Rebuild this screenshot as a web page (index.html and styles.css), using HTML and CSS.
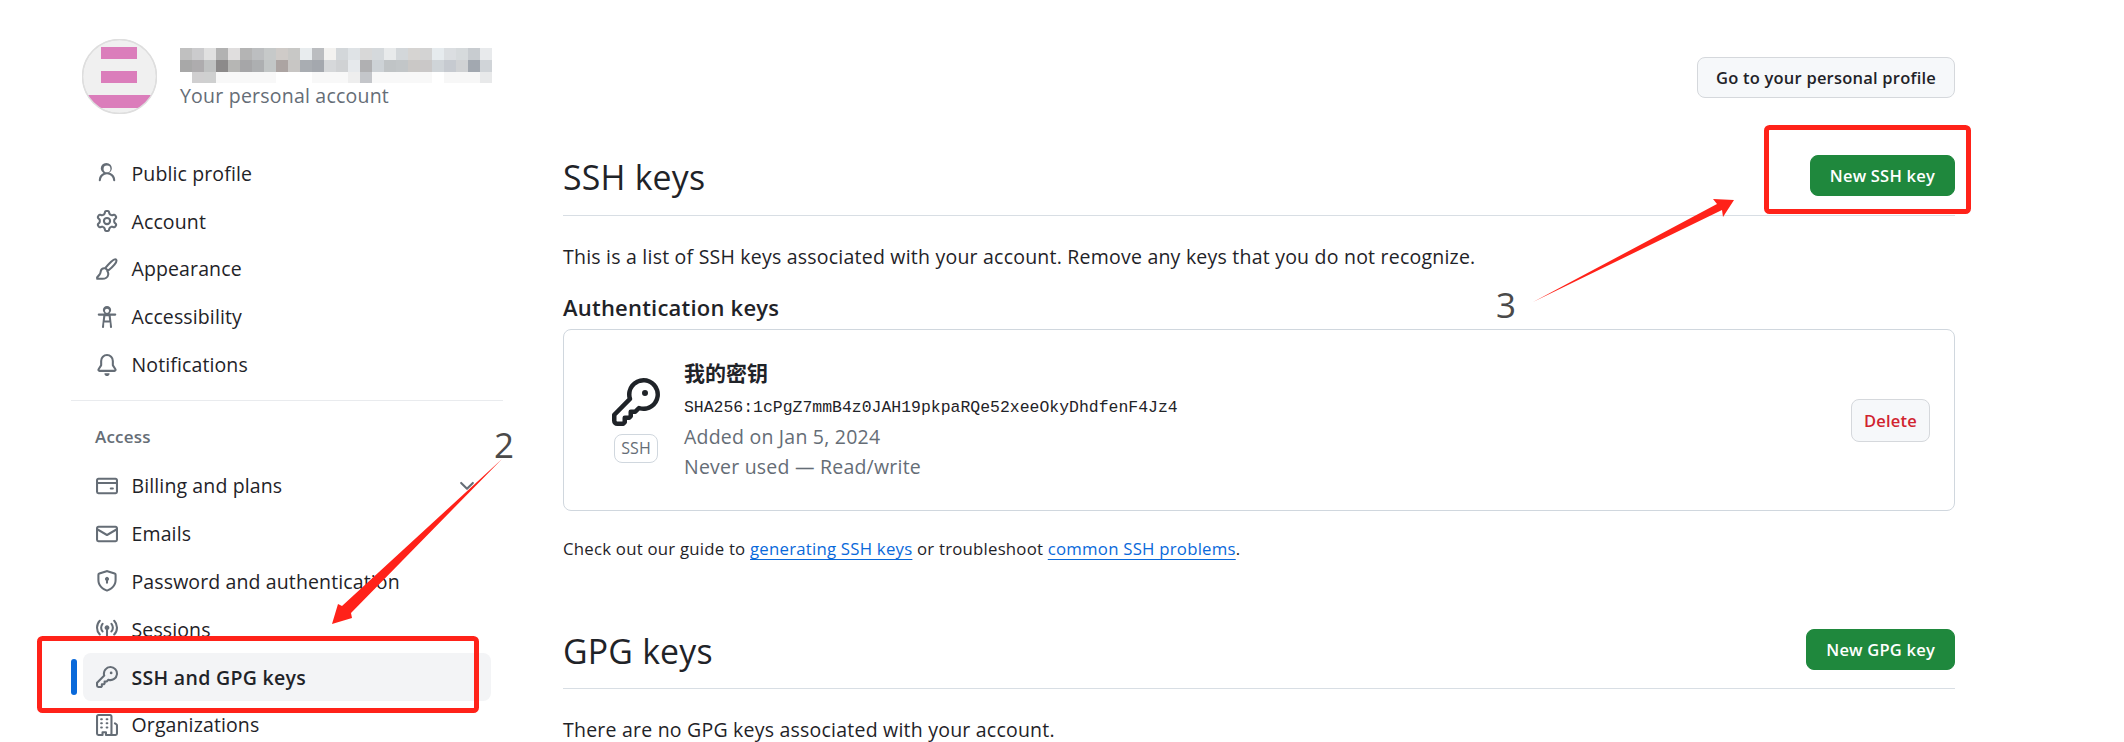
FILE: index.html
```html
<!DOCTYPE html>
<html lang="en">
<head>
  <meta charset="UTF-8" />
  <meta name="viewport" content="width=device-width, initial-scale=1" />
  <title>SSH and GPG keys</title>
  <link rel="stylesheet" href="styles.css">
</head>
<body>
  <div class="page">
    <aside class="sidebar">
      <div class="account">
        <svg class="avatar" viewBox="0 0 75 75">
          <defs><clipPath id="avatarClip"><circle cx="37.5" cy="37.5" r="37"/></clipPath></defs>
          <circle cx="37.5" cy="37.5" r="37" fill="#f0f0f0" stroke="#dedede" stroke-width="1"/>
          <g clip-path="url(#avatarClip)" fill="#db7dbb">
            <rect x="19" y="8" width="36" height="12"/>
            <rect x="19" y="32" width="36" height="12"/>
            <rect x="0" y="56" width="75" height="13"/>
          </g>
          <circle cx="37.5" cy="37.5" r="37" fill="none" stroke="#dedede" stroke-width="1.5"/>
        </svg>
        <div class="account-text">
          <svg class="blurred-name" viewBox="0 0 312 35" width="312" height="35">
            <g>
              <rect x="0" width="12" height="12" fill="#c0c0c0"/><rect x="12" width="12" height="12" fill="#cbcbcd"/><rect x="24" width="12" height="12" fill="#e0e0e0"/><rect x="36" width="12" height="12" fill="#b2b2b2"/><rect x="48" width="12" height="12" fill="#e0dede"/><rect x="60" width="12" height="12" fill="#b4b4b4"/><rect x="72" width="12" height="12" fill="#bcbec0"/><rect x="84" width="12" height="12" fill="#c6c9c9"/><rect x="96" width="12" height="12" fill="#cfcbc8"/><rect x="108" width="12" height="12" fill="#c8c8c6"/><rect x="120" width="12" height="12" fill="#e8ecee"/><rect x="132" width="12" height="12" fill="#bbbdc0"/><rect x="144" width="12" height="12" fill="#f3f2f0"/><rect x="156" width="12" height="12" fill="#d3d7da"/><rect x="168" width="12" height="12" fill="#dfe3e6"/><rect x="180" width="12" height="12" fill="#d8d8d8"/><rect x="192" width="12" height="12" fill="#d5d9dc"/><rect x="204" width="12" height="12" fill="#e8eaeb"/><rect x="216" width="12" height="12" fill="#d3d7da"/><rect x="228" width="12" height="12" fill="#d6d4d2"/><rect x="240" width="12" height="12" fill="#d3d3d3"/><rect x="252" width="12" height="12" fill="#e6ebee"/><rect x="264" width="12" height="12" fill="#dbdee1"/><rect x="276" width="12" height="12" fill="#d6dadc"/><rect x="288" width="12" height="12" fill="#c8ccd0"/><rect x="300" width="12" height="12" fill="#e8eaec"/>
            </g>
            <g transform="translate(0 12)">
              <rect x="0" width="12" height="12" fill="#a8a8a8"/><rect x="12" width="12" height="12" fill="#aeacae"/><rect x="24" width="12" height="12" fill="#c0c2c2"/><rect x="36" width="12" height="12" fill="#8c8a8a"/><rect x="48" width="12" height="12" fill="#b6b6b4"/><rect x="60" width="12" height="12" fill="#a6a6a8"/><rect x="72" width="12" height="12" fill="#adafb1"/><rect x="84" width="12" height="12" fill="#c2c6c6"/><rect x="96" width="12" height="12" fill="#aca4a2"/><rect x="108" width="12" height="12" fill="#c8c6c4"/><rect x="120" width="12" height="12" fill="#a9adb2"/><rect x="132" width="12" height="12" fill="#a4a8ae"/><rect x="144" width="12" height="12" fill="#d6d8da"/><rect x="156" width="12" height="12" fill="#d0d2d4"/><rect x="168" width="12" height="12" fill="#e6e9ec"/><rect x="180" width="12" height="12" fill="#b0b0b2"/><rect x="192" width="12" height="12" fill="#cdd2d6"/><rect x="204" width="12" height="12" fill="#c0c4c6"/><rect x="216" width="12" height="12" fill="#c2c6c8"/><rect x="228" width="12" height="12" fill="#cac8c6"/><rect x="240" width="12" height="12" fill="#cac8c8"/><rect x="252" width="12" height="12" fill="#cfd4d8"/><rect x="264" width="12" height="12" fill="#c6cad0"/><rect x="276" width="12" height="12" fill="#d0d2d4"/><rect x="288" width="12" height="12" fill="#a2a8b0"/><rect x="300" width="12" height="12" fill="#d0d4d8"/>
            </g>
            <g transform="translate(0 24)">
              <rect x="12" width="12" height="11" fill="#d0cfd0"/><rect x="24" width="12" height="11" fill="#cfd0d0"/><rect x="36" width="60" height="11" fill="#f8f8f8"/><rect x="132" width="36" height="11" fill="#f8f8f8"/><rect x="168" width="12" height="11" fill="#eeeeee"/><rect x="180" width="12" height="11" fill="#c4c6ca"/><rect x="192" width="60" height="11" fill="#f8f8f8"/><rect x="264" width="36" height="11" fill="#f7f7f7"/><rect x="300" width="12" height="11" fill="#e8e9ea"/>
            </g>
          </svg>
          <div class="account-label">Your personal account</div>
        </div>
      </div>

      <nav class="nav-group">
        <a class="nav-item">
          <svg class="icon" viewBox="0 0 16 16"><path d="M10.561 8.073a6.005 6.005 0 0 1 3.432 5.142.75.75 0 1 1-1.498.07 4.5 4.5 0 0 0-8.99 0 .75.75 0 1 1-1.498-.07 6.004 6.004 0 0 1 3.431-5.142 3.999 3.999 0 1 1 4.123 0ZM10.5 5a2.5 2.5 0 1 0-5 0 2.5 2.5 0 0 0 5 0Z"/></svg>
          Public profile
        </a>
        <a class="nav-item">
          <svg class="icon" viewBox="0 0 16 16"><path d="M8 0a8.2 8.2 0 0 1 .701.031C9.444.095 9.99.645 10.16 1.29l.288 1.107c.018.066.079.158.212.224.231.114.454.243.668.386.123.082.233.09.299.071l1.103-.303c.644-.176 1.392.021 1.82.63.27.385.506.792.704 1.218.315.675.111 1.422-.364 1.891l-.814.806c-.049.048-.098.147-.088.294.016.257.016.515 0 .772-.01.147.038.246.088.294l.814.806c.475.469.679 1.216.364 1.891a7.977 7.977 0 0 1-.704 1.217c-.428.61-1.176.807-1.82.63l-1.102-.302c-.067-.019-.177-.011-.3.071a5.909 5.909 0 0 1-.668.386c-.133.066-.194.158-.211.224l-.29 1.106c-.168.646-.715 1.196-1.458 1.26a8.006 8.006 0 0 1-1.402 0c-.743-.064-1.289-.614-1.458-1.26l-.289-1.106c-.018-.066-.079-.158-.212-.224a5.738 5.738 0 0 1-.668-.386c-.123-.082-.233-.09-.299-.071l-1.103.303c-.644.176-1.392-.021-1.82-.63a8.12 8.12 0 0 1-.704-1.218c-.315-.675-.111-1.422.363-1.891l.815-.806c.05-.048.098-.147.088-.294a6.214 6.214 0 0 1 0-.772c.01-.147-.038-.246-.088-.294l-.815-.806C.635 6.045.431 5.298.746 4.623a7.92 7.92 0 0 1 .704-1.217c.428-.61 1.176-.807 1.82-.63l1.102.302c.067.019.177.011.3-.071.214-.143.437-.272.668-.386.133-.066.194-.158.211-.224l.29-1.106C6.009.645 6.556.095 7.299.03 7.53.01 7.764 0 8 0Zm-.571 1.525c-.036.003-.108.036-.137.146l-.289 1.105c-.147.561-.549.967-.998 1.189-.173.086-.34.183-.5.29-.417.278-.97.423-1.529.27l-1.103-.303c-.109-.03-.175.016-.195.045-.22.312-.412.644-.573.99-.014.031-.021.11.059.19l.815.806c.411.406.562.957.53 1.456a4.709 4.709 0 0 0 0 .582c.032.499-.119 1.05-.53 1.456l-.815.806c-.081.08-.073.159-.059.19.162.346.353.677.573.989.02.03.085.076.195.046l1.102-.303c.56-.153 1.113-.008 1.53.27.161.107.328.204.501.29.447.222.85.629.997 1.189l.289 1.105c.029.109.101.143.137.146a6.6 6.6 0 0 0 1.142 0c.036-.003.108-.036.137-.146l.289-1.105c.147-.561.549-.967.998-1.189.173-.086.34-.183.5-.29.417-.278.97-.423 1.529-.27l1.103.303c.109.029.175-.016.195-.045.22-.313.411-.644.573-.99.014-.031.021-.11-.059-.19l-.815-.806c-.411-.406-.562-.957-.53-1.456a4.709 4.709 0 0 0 0-.582c-.032-.499.119-1.05.53-1.456l.815-.806c.081-.08.073-.159.059-.19a6.464 6.464 0 0 0-.573-.989c-.02-.03-.085-.076-.195-.046l-1.102.303c-.56.153-1.113.008-1.53-.27a4.44 4.44 0 0 0-.501-.29c-.447-.222-.85-.629-.997-1.189l-.289-1.105c-.029-.11-.101-.143-.137-.146a6.6 6.6 0 0 0-1.142 0ZM11 8a3 3 0 1 1-6 0 3 3 0 0 1 6 0ZM9.5 8a1.5 1.5 0 1 0-3.001.001A1.5 1.5 0 0 0 9.5 8Z"/></svg>
          Account
        </a>
        <a class="nav-item">
          <svg class="icon icon-line" viewBox="0 0 16 16"><path d="M14.6 1.2c-.7-.6-2 .1-3.6 1.5C9.600 4 8 5.700 6.700 7.300l2 2c1.700-1.400 3.500-3 4.700-4.500 1.300-1.600 1.900-2.900 1.200-3.600ZM6.600 7.500c-1.500-.2-2.800.6-3.100 2-.2 1-.3 2-.9 2.500l-1.800 2.200.1.900h3.800c2 0 4-1.100 4.200-3.100.1-.9-.1-1.700-.6-2.300"/></svg>
          Appearance
        </a>
        <a class="nav-item">
          <svg class="icon" viewBox="0 0 16 16"><path d="M9.923 5.302c.063.063.122.129.178.198H14A.75.75 0 0 1 14 7h-3.3l.578 5.163.362 2.997a.75.75 0 0 1-1.49.18L10.016 12h-4.03l-.135 3.34a.75.75 0 0 1-1.49-.18l.362-2.997L5.300 7H2a.75.75 0 0 1 0-1.500h3.900a2.540 2.540 0 0 1 .176-.198 3 3 0 1 1 3.847 0ZM9.200 7.500H6.800l-.4 3h3.200ZM8 5a1.500 1.500 0 1 0 .001-3.001A1.500 1.500 0 0 0 8 5Z"/></svg>
          Accessibility
        </a>
        <a class="nav-item">
          <svg class="icon" viewBox="0 0 16 16"><path d="M8 16c.9 0 1.700-.6 1.900-1.500.1-.3-.1-.5-.4-.5h-3c-.3 0-.5.2-.4.5.2.9 1 1.500 1.900 1.500ZM3 5a5 5 0 0 1 10 0v2.947c0 .05.015.098.042.139l1.703 2.555A1.519 1.519 0 0 1 13.482 13H2.518a1.516 1.516 0 0 1-1.263-2.360l1.703-2.554A.255.255 0 0 0 3 7.947Zm5-3.500A3.500 3.500 0 0 0 4.500 5v2.947c0 .346-.102.683-.294.97l-1.703 2.556a.017.017 0 0 0-.003.01l.001.006c0 .002.002.004.004.006l.006.004.007.001h10.964l.007-.001.006-.004.004-.006.001-.007a.017.017 0 0 0-.003-.01l-1.703-2.554a1.745 1.745 0 0 1-.294-.97V5A3.500 3.500 0 0 0 8 1.500Z"/></svg>
          Notifications
        </a>
      </nav>

      <div class="nav-divider"></div>
      <div class="nav-heading">Access</div>

      <nav class="nav-group">
        <a class="nav-item">
          <svg class="icon" viewBox="0 0 16 16"><path d="M10.750 9a.750.750 0 0 0 0 1.500h1.500a.750.750 0 0 0 0-1.500h-1.500Z"/><path d="M0 3.750C0 2.784.784 2 1.750 2h12.500c.966 0 1.750.784 1.750 1.750v8.500A1.750 1.750 0 0 1 14.250 14H1.750A1.750 1.750 0 0 1 0 12.250ZM14.500 6.500h-13v5.750c0 .138.112.25.25.25h12.500a.25.25 0 0 0 .25-.25Zm0-2.750a.25.25 0 0 0-.25-.25H1.750a.25.25 0 0 0-.25.25V5h13Z"/></svg>
          Billing and plans
          <svg class="icon chevron" viewBox="0 0 16 16"><path d="M12.780 5.220a.749.749 0 0 1 0 1.060l-4.250 4.250a.749.749 0 0 1-1.060 0L3.220 6.280a.749.749 0 1 1 1.060-1.060L8 8.939l3.720-3.719a.749.749 0 0 1 1.060 0Z"/></svg>
        </a>
        <a class="nav-item">
          <svg class="icon" viewBox="0 0 16 16"><path d="M1.750 2h12.500c.966 0 1.750.784 1.750 1.750v8.500A1.750 1.750 0 0 1 14.250 14H1.750A1.750 1.750 0 0 1 0 12.250v-8.500C0 2.784.784 2 1.750 2ZM1.500 12.251c0 .138.112.25.25.25h12.500a.25.25 0 0 0 .25-.25V5.809L8.380 9.397a.750.750 0 0 1-.76 0L1.500 5.809v6.442Zm13-8.181v-.32a.25.25 0 0 0-.25-.25H1.750a.25.25 0 0 0-.25.25v.32L8 7.880Z"/></svg>
          Emails
        </a>
        <a class="nav-item">
          <svg class="icon" viewBox="0 0 16 16"><path d="M7.467.133a1.748 1.748 0 0 1 1.066 0l5.250 1.680A1.750 1.750 0 0 1 15 3.480V7c0 1.566-.32 3.182-1.303 4.682-.983 1.498-2.585 2.813-5.032 3.855a1.697 1.697 0 0 1-1.330 0c-2.447-1.042-4.049-2.357-5.032-3.855C1.320 10.182 1 8.566 1 7V3.480a1.750 1.750 0 0 1 1.217-1.667Zm.61 1.429a.25.25 0 0 0-.153 0l-5.250 1.680a.25.25 0 0 0-.174.238V7c0 1.358.275 2.666 1.057 3.860.784 1.194 2.121 2.340 4.366 3.297a.196.196 0 0 0 .154 0c2.245-.956 3.582-2.104 4.366-3.298C13.225 9.666 13.500 8.360 13.500 7V3.480a.251.251 0 0 0-.174-.237l-5.250-1.680ZM9.500 6.500a1.500 1.500 0 0 1-.75 1.300v1.450a.75.75 0 0 1-1.500 0V7.800A1.500 1.500 0 1 1 9.500 6.500Z"/></svg>
          Password and authentication
        </a>
        <a class="nav-item">
          <svg class="icon" viewBox="0 0 16 16"><path d="M8.750 8.582v5.668a.75.75 0 0 1-1.500 0V8.582a1.750 1.750 0 1 1 1.500 0Zm3.983-7.125a.75.75 0 0 1 1.060.026A7.976 7.976 0 0 1 16 7c0 2.139-.84 4.083-2.207 5.517a.75.75 0 1 1-1.086-1.034A6.474 6.474 0 0 0 14.500 7a6.474 6.474 0 0 0-1.793-4.483.75.75 0 0 1 .026-1.060Zm-9.466 0a.75.75 0 0 1 .026 1.060A6.474 6.474 0 0 0 1.500 7a6.470 6.470 0 0 0 1.793 4.483.75.75 0 0 1-1.086 1.034A7.973 7.973 0 0 1 0 7c0-2.139.84-4.083 2.207-5.517a.75.75 0 0 1 1.060-.026Zm8.556 2.321A4.988 4.988 0 0 1 13 7a4.988 4.988 0 0 1-1.177 3.222.75.75 0 1 1-1.146-.967A3.487 3.487 0 0 0 11.500 7c0-.86-.309-1.645-.823-2.255a.75.75 0 0 1 1.146-.967Zm-6.492.958A3.480 3.480 0 0 0 4.500 7a3.480 3.480 0 0 0 .823 2.255.75.75 0 0 1-1.146.967A4.981 4.981 0 0 1 3 7a4.990 4.990 0 0 1 1.188-3.236.75.75 0 1 1 1.143.972Z"/></svg>
          Sessions
        </a>
        <a class="nav-item active">
          <svg class="icon" viewBox="0 0 16 16"><path d="M10.500 0a5.499 5.499 0 1 1-1.288 10.848l-.932.932a.749.749 0 0 1-.53.22H7v.75a.749.749 0 0 1-.22.53l-.5.5a.749.749 0 0 1-.53.22H5v.75a.749.749 0 0 1-.22.53l-.5.5a.749.749 0 0 1-.53.22h-2A1.750 1.750 0 0 1 0 14.250v-2c0-.199.079-.389.22-.53l4.932-4.932A5.500 5.500 0 0 1 10.500 0Zm-4 5.500c-.001.431.069.86.205 1.269a.75.75 0 0 1-.181.768L1.500 12.560v1.690c0 .138.112.25.25.25h1.690l.06-.06v-1.190a.75.75 0 0 1 .75-.75h1.190l.06-.06v-1.190a.75.75 0 0 1 .75-.75h1.190l1.023-1.025a.75.75 0 0 1 .768-.18A4 4 0 1 0 6.500 5.500ZM11 6a1 1 0 1 1 0-2 1 1 0 0 1 0 2Z"/></svg>
          SSH and GPG keys
        </a>
        <a class="nav-item">
          <svg class="icon" viewBox="0 0 16 16"><path d="M1.750 16A1.750 1.750 0 0 1 0 14.250V1.750C0 .784.784 0 1.750 0h8.500C11.216 0 12 .784 12 1.750v12.500c0 .085-.006.168-.018.25h2.268a.25.25 0 0 0 .25-.25V8.285a.25.25 0 0 0-.111-.208l-1.055-.703a.749.749 0 1 1 .832-1.248l1.055.703c.487.325.779.871.779 1.456v5.965A1.750 1.750 0 0 1 14.250 16h-3.500a.766.766 0 0 1-.197-.026c-.099.017-.2.026-.303.026h-3a.75.75 0 0 1-.75-.75V14h-1v1.250a.75.75 0 0 1-.75.75Zm-.25-1.750c0 .138.112.25.25.25H4v-1.250a.75.75 0 0 1 .75-.75h2.500a.75.75 0 0 1 .75.75v1.250h2.250a.25.25 0 0 0 .25-.25V1.750a.25.25 0 0 0-.25-.25h-8.500a.25.25 0 0 0-.25.25ZM3.750 6h.5a.75.75 0 0 1 0 1.500h-.5a.75.75 0 0 1 0-1.500ZM3 3.750A.75.75 0 0 1 3.750 3h.5a.75.75 0 0 1 0 1.500h-.5A.75.75 0 0 1 3 3.750Zm4 3A.75.75 0 0 1 7.750 6h.5a.75.75 0 0 1 0 1.500h-.5A.75.75 0 0 1 7 6.750ZM7.750 3h.5a.75.75 0 0 1 0 1.500h-.5a.75.75 0 0 1 0-1.500ZM3 9.750A.75.75 0 0 1 3.750 9h.5a.75.75 0 0 1 0 1.500h-.5A.75.75 0 0 1 3 9.750ZM7.750 9h.5a.75.75 0 0 1 0 1.500h-.5a.75.75 0 0 1 0-1.500Z"/></svg>
          Organizations
        </a>
      </nav>
    </aside>

    <main class="content">
      <div class="top-row">
        <button class="btn">Go to your personal profile</button>
      </div>

      <div class="section-head ssh-head">
        <h2>SSH keys</h2>
        <button class="btn btn-primary">New SSH key</button>
      </div>
      <p class="intro">This is a list of SSH keys associated with your account. Remove any keys that you do not recognize.</p>
      <h3>Authentication keys</h3>

      <div class="key-box">
        <div class="key-badge">
          <svg class="key-icon" viewBox="0 0 16 16"><path d="M10.500 0a5.499 5.499 0 1 1-1.288 10.848l-.932.932a.749.749 0 0 1-.53.22H7v.75a.749.749 0 0 1-.22.53l-.5.5a.749.749 0 0 1-.53.22H5v.75a.749.749 0 0 1-.22.53l-.5.5a.749.749 0 0 1-.53.22h-2A1.750 1.750 0 0 1 0 14.250v-2c0-.199.079-.389.22-.53l4.932-4.932A5.500 5.500 0 0 1 10.500 0Zm-4 5.500c-.001.431.069.86.205 1.269a.75.75 0 0 1-.181.768L1.500 12.560v1.690c0 .138.112.25.25.25h1.690l.06-.06v-1.190a.75.75 0 0 1 .75-.75h1.190l.06-.06v-1.190a.75.75 0 0 1 .75-.75h1.190l1.023-1.025a.75.75 0 0 1 .768-.18A4 4 0 1 0 6.500 5.500ZM11 6a1 1 0 1 1 0-2 1 1 0 0 1 0 2Z"/></svg>
          <span class="key-label">SSH</span>
        </div>
        <div class="key-info">
          <div class="key-title">我的密钥</div>
          <code class="key-hash">SHA256:1cPgZ7mmB4z0JAH19pkpaRQe52xeeOkyDhdfenF4Jz4</code>
          <div class="key-meta">Added on Jan 5, 2024</div>
          <div class="key-meta">Never used — Read/write</div>
        </div>
        <button class="btn btn-danger">Delete</button>
      </div>

      <p class="guide">Check out our guide to <a href="#">generating SSH keys</a> or troubleshoot <a href="#">common SSH problems</a>.</p>

      <div class="section-head gpg-head">
        <h2>GPG keys</h2>
        <button class="btn btn-primary">New GPG key</button>
      </div>
      <p class="intro">There are no GPG keys associated with your account.</p>
    </main>
  </div>

  <!-- red marks drawn on top of the screenshot -->
  <svg class="marks" width="2124" height="742" viewBox="0 0 2124 742">
    <rect x="39.500" y="638.500" width="437" height="72" rx="3"/>
    <rect x="1766.500" y="127.500" width="202" height="84" rx="3"/>
    <polygon class="solid" points="502,459 351,613 352,618 332,624 338,604 342,606"/>
    <polygon class="solid" points="1533,302 1722,210 1723,217 1734,200 1713,199 1717,204"/>
  </svg>
  <span class="mark-num num-2">2</span>
  <span class="mark-num num-3">3</span>
</body>
</html>
```

FILE: styles.css
```css
html, body {
  margin: 0;
  height: 742px;
  overflow: hidden;
  background: #fff;
}
body {
  font-family: "Open Sans", "Noto Sans CJK SC", sans-serif;
  font-size: 19.500px;
  letter-spacing: .22px;
  color: #1f2328;
  position: relative;
}
.page {
  display: flex;
  gap: 60px;
  padding-left: 71px;
  width: 1884px;
}

/* sidebar */
.sidebar {
  width: 432px;
  flex-shrink: 0;
  padding-top: 39px;
}
.account {
  display: flex;
  align-items: flex-start;
  gap: 23px;
  margin-left: 11px;
  height: 75px;
  margin-bottom: 35.500px;
}
.avatar {
  width: 75px;
  height: 75px;
  flex-shrink: 0;
}
.account-text {
  padding-top: 9px;
}
.blurred-name {
  display: block;
}
.account-label {
  color: #656d76;
  line-height: 24px;
  margin-top: 1px;
}
.nav-item {
  display: flex;
  align-items: center;
  gap: 13.500px;
  height: 47.800px;
  margin: 0 12px;
  padding: 0 13px;
  border-radius: 8px;
  letter-spacing: .12px;
  position: relative;
}
.icon {
  width: 22px;
  height: 22px;
  flex-shrink: 0;
  fill: #656d76;
}
.icon-line {
  fill: none;
  stroke: #656d76;
  stroke-width: 1.500;
  stroke-linejoin: round;
  stroke-linecap: round;
}
.chevron {
  margin-left: auto;
}
.nav-item.active {
  background: #f3f4f6;
  font-weight: 600;
  letter-spacing: .3px;
}
.nav-item.active::before {
  content: "";
  position: absolute;
  left: -12px;
  top: 6px;
  bottom: 6px;
  width: 6px;
  border-radius: 3px;
  background: #0969da;
}
.nav-divider {
  height: 1px;
  background: #e9ebee;
  margin-top: 11.500px;
}
.nav-heading {
  margin: 24px 0 13px 24px;
  font-size: 17px;
  line-height: 24px;
  font-weight: 600;
  color: #656d76;
}

/* main column */
.content {
  width: 1392px;
}
.top-row {
  display: flex;
  justify-content: flex-end;
  padding-top: 57px;
}
.btn {
  font-family: inherit;
  font-size: 16.500px;
  letter-spacing: .22px;
  font-weight: 600;
  height: 41px;
  padding: 0 18px;
  border: 1px solid #d5d8dc;
  border-radius: 8px;
  background: #f6f8fa;
  color: #1f2328;
}
.btn-primary {
  padding: 0 19px;
  background: #1f883d;
  border-color: #1f883d;
  color: #fff;
}
.btn-danger {
  height: 43px;
  color: #d1242f;
  padding: 0 12px;
}
.section-head {
  display: flex;
  justify-content: space-between;
  align-items: center;
  padding-bottom: 18px;
  border-bottom: 1px solid #d8dee4;
}
.ssh-head {
  margin-top: 57px;
  padding-bottom: 19px;
}
.gpg-head {
  margin-top: 68px;
}
h2 {
  margin: 0;
  padding-top: 3px;
  font-size: 33.800px;
  font-weight: 400;
  line-height: 38px;
}
.intro {
  margin: 27px 0 0;
  line-height: 28px;
}
h3 {
  margin: 22px 0 8px;
  font-size: 22px;
  font-weight: 600;
  line-height: 28px;
}
.key-box {
  display: flex;
  align-items: center;
  height: 182px;
  box-sizing: border-box;
  padding: 0 24px 0 48px;
  border: 1px solid #d0d7de;
  border-radius: 8px;
}
.key-badge {
  display: flex;
  flex-direction: column;
  align-items: center;
  gap: 8px;
  width: 48px;
}
.key-icon {
  width: 48px;
  height: 48px;
  fill: #1f2328;
}
.key-label {
  font-size: 16px;
  letter-spacing: 0;
  line-height: 27px;
  padding: 0 6px;
  color: #656d76;
  border: 1px solid #d0d7de;
  border-radius: 8px;
}
.key-info {
  margin-left: 24px;
  flex: 1;
}
.key-title {
  font-family: "Noto Sans CJK SC", sans-serif;
  font-weight: 700;
  font-size: 21px;
  letter-spacing: 0;
  line-height: 28px;
  margin-bottom: 7px;
}
.key-hash {
  display: block;
  font-family: "Liberation Mono", monospace;
  font-size: 16.470px;
  letter-spacing: 0;
  line-height: 29px;
}
.key-meta {
  color: #656d76;
  line-height: 30.500px;
}
.guide {
  margin: 26px 0 0;
  font-size: 16.800px;
  line-height: 24px;
}
.guide a {
  color: #0969da;
  text-decoration: underline;
  text-decoration-thickness: 1px;
  text-underline-offset: 4px;
}

/* annotations */
.marks {
  position: absolute;
  left: 0;
  top: 0;
  fill: none;
  stroke: #ff2219;
  stroke-width: 5;
  pointer-events: none;
}
.marks .solid {
  fill: #ff2219;
  stroke: none;
}
.mark-num {
  position: absolute;
  font-size: 35px;
  line-height: 40px;
  color: #4a4a4a;
}
.num-2 {
  left: 494px;
  top: 425px;
}
.num-3 {
  left: 1496px;
  top: 285px;
}
```
